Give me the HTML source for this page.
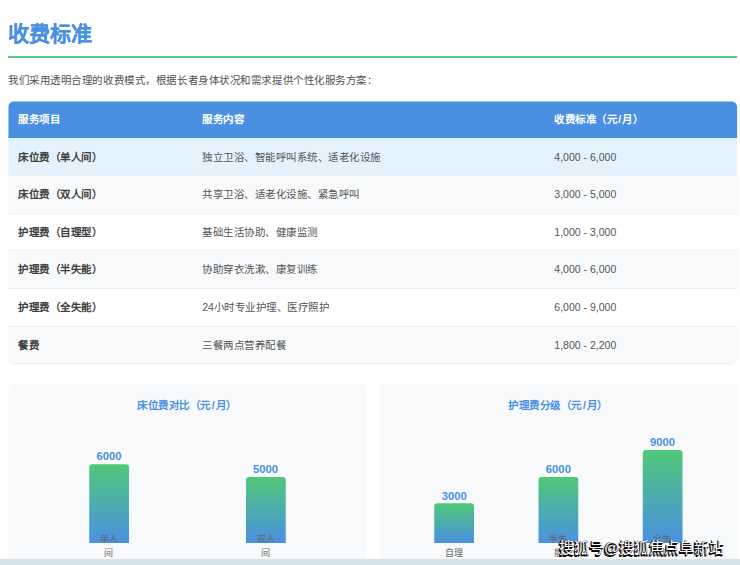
<!DOCTYPE html>
<html lang="zh-CN"><head><meta charset="utf-8">
<style>
*{margin:0;padding:0;box-sizing:border-box}
html,body{width:740px;height:565px;overflow:hidden;background:#fff}
body{font-family:"Liberation Sans",sans-serif;color:#333;position:relative}
.pg{position:absolute;left:0;top:0;width:987px;height:754px;transform:scale(0.75);transform-origin:0 0}
.pg div{position:absolute}
.title{left:10.67px;top:27.3px;font-size:28px;font-weight:bold;-webkit-text-stroke:0.25px #4a90e2;color:#4a90e2;line-height:36px;white-space:nowrap}
.rule{position:absolute;left:8px;top:56px;width:729px;height:2px;background:#58c981}
.intro{left:10.67px;top:96.8px;font-size:14px;line-height:20px;color:#505050;white-space:nowrap;letter-spacing:0.08px}
.tbl{left:10.67px;top:134.67px;width:972px;height:350.2px;border-radius:8px;overflow:hidden;box-shadow:0 1px 4px rgba(0,0,0,.035)}
.tbl .row{left:0;width:972px;height:50.2px;font-size:14px;line-height:50px;white-space:nowrap}
.tbl .row span{position:absolute;top:0}
.c1{left:13.5px}.c2{left:259px}.c3{left:728.5px}
.hd{background:#4a90e2;color:#fff;font-weight:bold;border-bottom:none!important}
.hd span{top:0.7px!important}
.r1{background:#e3f2fd}
.r2{background:#f8f9fa}
.r3{background:#fff}
.b{font-weight:bold;color:#404040}
.t{color:#555}
.card{top:511.9px;height:260px;width:477px;background:#f8f9fa;border-radius:6px}
.ct{top:530px;width:477px;text-align:center;font-size:14px;line-height:20px;font-weight:bold;color:#4a90e2;white-space:nowrap}
.bar{width:53px;border-radius:4px 4px 0 0;background:linear-gradient(#50c878,#4a90e2)}
.val{width:80px;text-align:center;font-size:15px;line-height:18px;font-weight:bold;color:#4a90e2}
.lab{width:53px;text-align:center;font-size:12px;color:#666;line-height:19px;white-space:nowrap}
.sl{font-style:normal;margin:0 1.3px}
.ln{position:absolute;left:8px;width:729px;height:1px;background:#edeef0}
.strip{position:absolute;left:0;top:558.5px;width:740px;height:7px;background:#d5e3ea}
.wm{position:absolute;left:559px;top:536.3px;font-size:15px;line-height:24px;color:#fff;font-weight:normal;white-space:nowrap;text-shadow:-1px 1px 0 #111,-1px 0 0 #111,0 1px 0 #111,-1.5px 1.5px 0.5px #000}
</style></head><body>
<div class="pg">
<div class="title">收费标准</div>
<div class="intro">我们采用透明合理的收费模式，根据长者身体状况和需求提供个性化服务方案：</div>
<div class="tbl">
  <div class="row hd" style="top:0;height:49px;line-height:49px"><span class="c1">服务项目</span><span class="c2">服务内容</span><span class="c3">收费标准（元<i class="sl">/</i>月）</span></div>
  <div class="row r1" style="top:49px"><span class="c1 b">床位费（单人间）</span><span class="c2 t">独立卫浴、智能呼叫系统、适老化设施</span><span class="c3 t">4,000 - 6,000</span></div>
  <div class="row r2" style="top:99.2px"><span class="c1 b">床位费（双人间）</span><span class="c2 t">共享卫浴、适老化设施、紧急呼叫</span><span class="c3 t">3,000 - 5,000</span></div>
  <div class="row r3" style="top:149.4px"><span class="c1 b">护理费（自理型）</span><span class="c2 t">基础生活协助、健康监测</span><span class="c3 t">1,000 - 3,000</span></div>
  <div class="row r2" style="top:199.6px"><span class="c1 b">护理费（半失能）</span><span class="c2 t">协助穿衣洗漱、康复训练</span><span class="c3 t">4,000 - 6,000</span></div>
  <div class="row r3" style="top:249.8px"><span class="c1 b">护理费（全失能）</span><span class="c2 t">24小时专业护理、医疗照护</span><span class="c3 t">6,000 - 9,000</span></div>
  <div class="row r2" style="top:300px"><span class="c1 b">餐费</span><span class="c2 t">三餐两点营养配餐</span><span class="c3 t">1,800 - 2,200</span></div>
</div>

<div class="card" style="left:10.67px"></div>
<div class="card" style="left:505.7px"></div>
<div class="ct" style="left:10.67px">床位费对比（元<i class="sl">/</i>月）</div>
<div class="ct" style="left:505.7px">护理费分级（元<i class="sl">/</i>月）</div>

<!-- left chart -->
<div class="val" style="left:105.3px;top:599.0px">6000</div>
<div class="bar" style="left:118.8px;top:618.5px;height:105.9px"></div>
<div class="lab" style="left:118.8px;top:708.7px">单人<br>间</div>
<div class="val" style="left:314.1px;top:617.0px">5000</div>
<div class="bar" style="left:327.6px;top:636.1px;height:88.3px"></div>
<div class="lab" style="left:327.6px;top:708.7px">双人<br>间</div>

<!-- right chart -->
<div class="val" style="left:565.6px;top:652.0px">3000</div>
<div class="bar" style="left:579.1px;top:671.3px;height:53.1px"></div>
<div class="lab" style="left:579.1px;top:727.7px">自理</div>
<div class="val" style="left:704.5px;top:617.0px">6000</div>
<div class="bar" style="left:718px;top:636px;height:88.4px"></div>
<div class="lab" style="left:718px;top:708.7px">半失<br>能</div>
<div class="val" style="left:843.2px;top:581.0px">9000</div>
<div class="bar" style="left:856.7px;top:600.4px;height:124px"></div>
<div class="lab" style="left:856.7px;top:708.7px">全失<br>能</div>

</div>
<div class="rule"></div>
<div class="ln" style="top:175px"></div>
<div class="ln" style="top:213px"></div>
<div class="ln" style="top:250px"></div>
<div class="ln" style="top:288px"></div>
<div class="ln" style="top:326px"></div>
<div class="ln" style="top:363px;left:12px;width:721px"></div>
<div class="strip"></div>
<div class="wm">搜狐号@搜狐焦点阜新站</div>
</body></html>
